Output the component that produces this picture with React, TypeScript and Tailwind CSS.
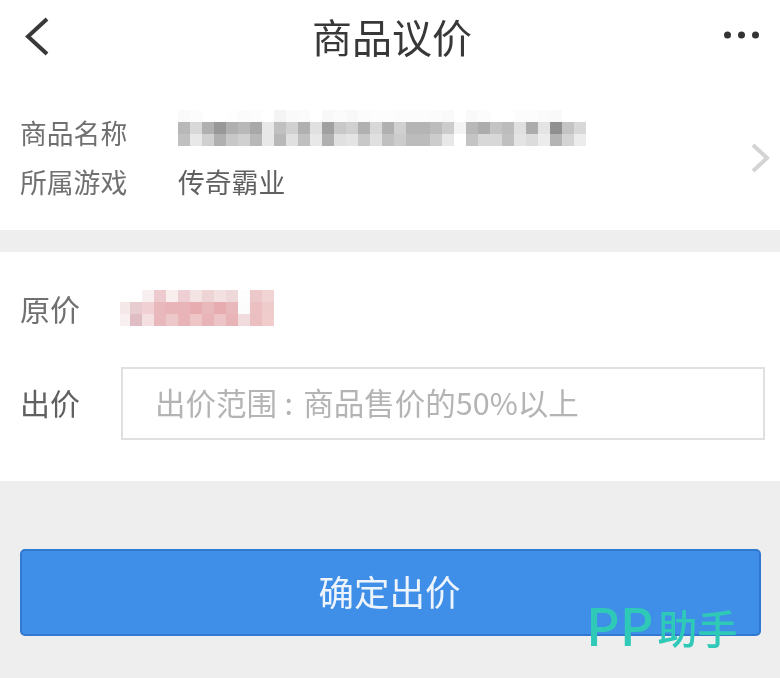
import React from "react";

const cjk = "font-['Noto_Sans_CJK_SC','Noto_Sans',sans-serif]";

// mosaic cells over the blurred-out product name, 12px squares
const nameMosaic = [
  ["fafafa", "fcfcfc", "ffffff", "ffffff", "fefefe", "fbfbfb", "fcfcfc", "ffffff", "f4f4f4", "fafafa", "fbfbfb", "ffffff", "f8f8f8", "fbfbfb", "f8f8f8", "fcfcfc", "fdfdfd", "fdfdfd", "fcfcfc", "fcfcfc", "fcfcfc", "fbfbfb", "f9f9f9", "ffffff", "f9f9f9", "fcfcfc", "ffffff", "ffffff", "fcfcfc", "fcfcfc", "fafafa", "f9f9f9", "ffffff", "ffffff"],
  ["b8b8b8", "d8d8d8", "b0b0b0", "989898", "b0b0b0", "b8b8b8", "a8a8a8", "e8e8e8", "c0c0c0", "d0d0d0", "b0b0b0", "e0e0e0", "a0a0a0", "c8c8c8", "d0d0d0", "b0b0b0", "d8d8d8", "b0b0b0", "d0d0d0", "b4b4b4", "b4b4b4", "bcbcbc", "cccccc", "f4f4f4", "b8b8b8", "acacac", "c4c4c4", "bcbcbc", "e0e0e0", "acacac", "e4e4e4", "909090", "c4c4c4", "d8d8d8"],
  ["c0c0c0", "e8e8e8", "d0d0d0", "b0b0b0", "c8c8c8", "d0d0d0", "b8b8b8", "e8e8e8", "b8b8b8", "e0e0e0", "c0c0c0", "e8e8e8", "b0b0b0", "e0e0e0", "e4e4e4", "c8c8c8", "e0e0e0", "c0c0c0", "cccccc", "bcbcbc", "bcbcbc", "cccccc", "e8e8e8", "ffffff", "c4c4c4", "d8d8d8", "d8d8d8", "c0c0c0", "e4e4e4", "dcdcdc", "ececec", "b4b4b4", "d4d4d4", "ececec"],
];

// first cell of each row is the narrow 10px sliver on the left
const priceMosaic = [
  ["ffffff", "ffffff", "f8f0f0", "eccace", "f8eeee", "eed0d4", "f3e3e3", "efd4d6", "f3e1e1", "efd8da", "fdfdfd", "ecc8ca", "f0d4d4"],
  ["f4e8e8", "e8cdd0", "f0d0d2", "e8b8bc", "e8b4b8", "e8b4b8", "e6acb0", "e8b8ba", "e6acb0", "e8b8bc", "fcfcfc", "ecc0c2", "eecccc"],
  ["f8f0f0", "e0bcc4", "f4e0e0", "e8b8bc", "ecc8ca", "e8b4b8", "eec6c8", "e8b4b8", "ecc4c8", "e8b4b8", "f0dcdc", "ebbfc1", "f0cccc"],
];

function Mosaic({ rows, sliver }: { rows: string[][]; sliver?: boolean }) {
  return (
    <div className="flex flex-col">
      {rows.map((row, i) => (
        <div key={i} className="flex">
          {row.map((c, j) => (
            <div
              key={j}
              className="h-3 shrink-0"
              style={{ backgroundColor: `#${c}`, width: sliver && j === 0 ? 10 : 12 }}
            />
          ))}
        </div>
      ))}
    </div>
  );
}

export default function App() {
  return (
    <div className={`relative w-[780px] h-[678px] overflow-hidden bg-[#eeeeee] blur-[0.5px] ${cjk}`}>
      {/* Top info card */}
      <section className="h-[230px] bg-white">
        <header className="h-[76px] flex items-center justify-between pl-6 pr-[20px]">
          <svg width="28" height="40" viewBox="0 0 28 40" fill="none" className="-mt-1">
            <path d="M23 3 L4 20.5 L23 38" stroke="#383838" strokeWidth="4" />
          </svg>
          <h1 className="text-[40px] leading-[70px] -mt-[4px] ml-[8px] font-normal text-[#383838]">商品议价</h1>
          <svg width="36" height="8" viewBox="0 0 36 8" className="-mt-[6px]">
            <circle cx="3.5" cy="4" r="3.5" fill="#333333" />
            <circle cx="17.5" cy="4" r="3.5" fill="#333333" />
            <circle cx="31.5" cy="4" r="3.5" fill="#333333" />
          </svg>
        </header>
        <div className="flex items-center pl-5 pr-[10px] pt-[33px]">
          <div className="flex-1">
            <div className="h-12 flex items-center text-[26.8px] text-[#707070]">
              <span className="w-[158px] shrink-0">商品名称</span>
              <div className="self-start mt-px">
                <Mosaic rows={nameMosaic} />
              </div>
            </div>
            <div className="h-[50px] flex items-center text-[26.8px]">
              <span className="w-[158px] shrink-0 text-[#707070]">所属游戏</span>
              <span className="text-[#606060]">传奇霸业</span>
            </div>
          </div>
          <svg width="20" height="30" viewBox="0 0 20 30" fill="none">
            <path d="M3 2 L17 15 L3 28" stroke="#d4d4d4" strokeWidth="4" />
          </svg>
        </div>
      </section>

      {/* Price card */}
      <section className="mt-[22px] h-[229px] bg-white pl-5 pr-[15px] pt-[38px]">
        <div className="h-[36px] flex items-center">
          <span className="w-[100px] shrink-0 text-[30px] leading-[32px] text-[#707070]">原价</span>
          <Mosaic rows={priceMosaic} sliver />
        </div>
        <div className="mt-[41px] flex items-center">
          <span className="w-[101px] shrink-0 text-[30px] leading-[32px] -mt-[3px] text-[#606060]">出价</span>
          <input
            readOnly
            placeholder={"出价范围\u2005:\u2004商品售价的50%以上"}
            className="flex-1 min-w-0 h-[73px] border-2 border-[#e0e0e0] bg-white pl-[32px] pb-[3px] text-[30.5px] outline-none placeholder:text-[#b4b4b4]"
          />
        </div>
      </section>

      {/* Submit */}
      <div className="pl-5 pr-[19px] pt-[68px]">
        <button className="w-full h-[87px] rounded-[5px] border-2 border-[#3078d0] bg-[#3f8ee8] pb-[3px] pr-[2px] text-[35.5px] text-[#eef4fc]">
          确定出价
        </button>
      </div>

      {/* App store watermark */}
      <div className="absolute left-[586px] top-[592px] h-[70px] flex items-center font-medium text-[#2fc9b8]">
        <span className="text-[52px] leading-[70px] -mt-[7px]">PP</span>
        <span className="text-[40px] leading-[70px] ml-[4px]">助手</span>
      </div>
    </div>
  );
}
